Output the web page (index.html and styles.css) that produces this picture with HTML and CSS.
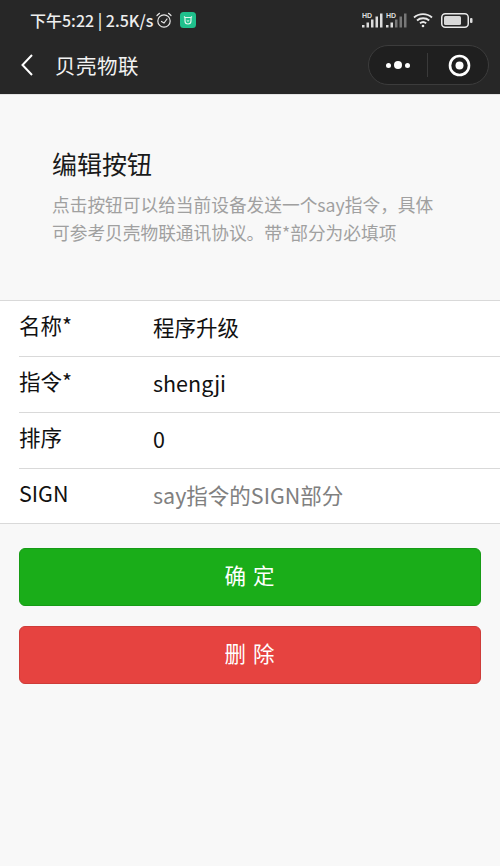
FILE: index.html
```html
<!DOCTYPE html>
<html lang="zh">
<head>
<meta charset="utf-8">
<title>贝壳物联</title>
<link rel="stylesheet" href="styles.css">
</head>
<body>
<header class="top">
  <div class="status">
    <div class="status-left">
      <span class="status-text">下午5:22 | 2.5K/s</span>
      <svg class="alarm" width="18" height="18" viewBox="0 0 18 18" fill="none" stroke="#e8e8e8" stroke-width="1.2"><circle cx="9" cy="10" r="6.2"/><path d="M6.5 10.5 9 12l3-4M2 4.5 4.5 2.300M16 4.500 13.500 2.300" stroke-linecap="round"/></svg>
      <svg class="mi" width="16" height="16" viewBox="0 0 16 16"><rect width="16" height="16" rx="3.500" fill="#1fc08c"/><path d="M4 4.500l1 1h6l1-1M5 5.500v3.500a3 3 0 0 0 6 0V5.500M7 8.500a1.200 1.200 0 0 0 2 0" fill="none" stroke="#dff7ec" stroke-width="1.200"/></svg>
    </div>
    <div class="status-right">
      <svg width="21" height="16" viewBox="0 0 21 16"><text class="hd" x="0" y="6">HD</text><path fill="#dcdcdc" d="M0 13h2.500v2.500H0zM4.500 10.500H7v5H4.500zM9 7.500h2.500v8H9zM13.500 4.500H16v11h-2.500zM18 1.500h2.500v14H18z"/></svg>
      <svg width="21" height="16" viewBox="0 0 21 16"><text class="hd" x="0" y="6">HD</text><path fill="#dcdcdc" d="M0 13h2.500v2.500H0zM4.500 10.500H7v5H4.500z"/><path fill="#777" d="M9 7.500h2.500v8H9zM13.500 4.500H16v11h-2.500zM18 1.500h2.500v14H18z"/></svg>
      <svg class="wifi" width="21" height="16" viewBox="0 0 21 16" fill="none" stroke="#e8e8e8" stroke-width="1.800"><path d="M1 5.500c5-4.500 13-4.500 18 0M4 8.500c3.200-3 9-3 12.200 0M7 11.300c1.800-1.500 4.400-1.500 6.200 0"/><circle cx="10" cy="14" r="1.300" fill="#e8e8e8" stroke="none"/></svg>
      <svg class="battery" width="32" height="15" viewBox="0 0 32 15"><rect x=".75" y=".75" width="26.500" height="13.500" rx="3.500" fill="none" stroke="#e8e8e8" stroke-width="1.500"/><rect x="3" y="3" width="17" height="9" rx="1.500" fill="#d8d8d8"/><rect x="29" y="5" width="2.500" height="5" rx="1" fill="#dcdcdc"/></svg>
    </div>
  </div>
  <nav class="nav">
    <svg class="back" width="14" height="22" viewBox="0 0 14 22" fill="none" stroke="#fff" stroke-width="2"><path d="M12 1 2.500 11 12 21"/></svg>
    <span class="nav-title">贝壳物联</span>
    <div class="capsule">
      <span class="dots"><i class="dot"></i><i class="dot big"></i><i class="dot"></i></span>
      <span class="sep"></span>
      <span class="target"><svg width="23" height="23" viewBox="0 0 23 23"><circle cx="11.500" cy="11.500" r="9.500" fill="none" stroke="#fff" stroke-width="2.600"/><circle cx="11.500" cy="11.500" r="4" fill="#fff"/></svg></span>
    </div>
  </nav>
</header>
<main>
  <section class="intro">
    <h1 class="title">编辑按钮</h1>
    <p class="desc">点击按钮可以给当前设备发送一个say指令，具体可参考贝壳物联通讯协议。带*部分为必填项</p>
  </section>
  <section class="form">
    <div class="row"><span class="label">名称*</span><span class="value">程序升级</span></div>
    <div class="row"><span class="label">指令*</span><span class="value">shengji</span></div>
    <div class="row"><span class="label">排序</span><span class="value">0</span></div>
    <div class="row"><span class="label">SIGN</span><span class="value placeholder">say指令的SIGN部分</span></div>
  </section>
  <section class="actions">
    <button class="btn ok">确 定</button>
    <button class="btn del">删 除</button>
  </section>
</main>
</body>
</html>
```
FILE: styles.css
```css
* { box-sizing: border-box; }
html, body { margin: 0; padding: 0; }
body {
  width: 500px;
  height: 866px;
  overflow: hidden;
  background: #f8f8f8;
  font-family: "Noto Sans CJK SC", "Noto Sans", sans-serif;
  color: #111;
}
.top { height: 95px; background: #272727; color: #fff; border-bottom: 1px solid #e4e4e4; }
.status { height: 40px; display: flex; justify-content: space-between; align-items: center; padding: 0 10px 0 30px; }
.status-left { display: flex; align-items: center; gap: 5px; }
.status-text { font-size: 16px; font-weight: 500; color: #eee; line-height: 20px; white-space: nowrap; margin-right: -3px; }
.alarm { margin-right: 2px; }
.status-right { display: flex; align-items: center; gap: 3px; padding-right: 17px; }
.hd { font: 700 7px "Liberation Sans", sans-serif; fill: #ddd; }
.wifi { margin: 0 4px 0 3px; }
.nav { height: 50px; display: flex; align-items: center; padding: 0 11px 0 20px; }
.nav-title { margin-left: 21px; font-size: 20.500px; line-height: 28px; color: #f2f2f2; letter-spacing: 0.500px; }
.capsule {
  margin-left: auto; width: 121px; height: 40px;
  border: 1px solid #3c3c3c; border-radius: 20px; background: #1f1f1f;
  display: flex; align-items: center;
}
.dots { flex: 1; display: flex; justify-content: center; align-items: center; gap: 3px; }
.dot { width: 5px; height: 5px; border-radius: 50%; background: #fff; }
.dot.big { width: 8px; height: 8px; }
.sep { width: 1px; height: 24px; background: #3a3a3a; }
.target { flex: 1; display: flex; justify-content: center; align-items: center; padding-left: 2px; }
.intro { height: 205px; padding: 50px 52px 0; }
.title { margin: 0; font-size: 25px; font-weight: 400; line-height: 36px; color: #1a1a1a; }
.desc { margin: 9px 0 0; width: 386px; font-size: 17.700px; line-height: 28px; color: #a0a0a0; }
.form { background: #fff; border-top: 1px solid #d9d9d9; border-bottom: 1px solid #d9d9d9; }
.row { height: 56px; margin-left: 19px; display: flex; align-items: center; border-top: 1px solid #d9d9d9; }
.row:first-child { border-top: 0; height: 55px; }
.row:last-child { height: 55px; }
.label { width: 134px; font-size: 21.500px; line-height: 28px; margin-bottom: 7px; color: #111; }
.value { font-size: 21.500px; line-height: 28px; margin-bottom: 3px; color: #111; }
.placeholder { color: #808080; }
.actions { padding: 24px 19px 0 19px; display: flex; flex-direction: column; gap: 20px; }
.btn {
  height: 58px; width: 100%; border-radius: 6px; color: #fff;
  font: 400 21.500px "Noto Sans CJK SC", sans-serif; letter-spacing: 1px;
  display: block; padding: 0 0 6px;
}
.ok { background: #1aad19; border: 1px solid #179b16; }
.del { background: #e64340; border: 1px solid #ce3c39; }
```
